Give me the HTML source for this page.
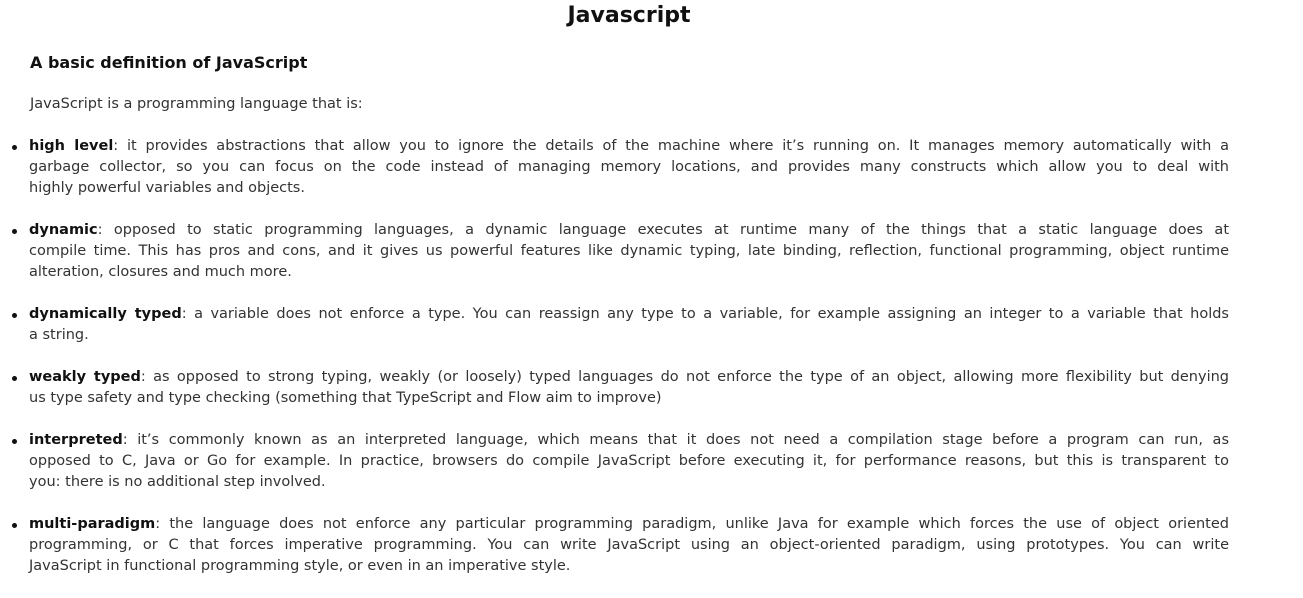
<!DOCTYPE html>
<html><head><meta charset="utf-8"><style>
body{margin:0;background:#fff;color:#111;font-family:"DejaVu Sans","Liberation Sans",sans-serif;width:1303px;height:584px;overflow:hidden}
h1{margin:0;position:absolute;top:3px;left:0;width:1258px;text-align:center;font-size:22px;line-height:26px;font-weight:bold}
h2{position:absolute;top:51px;left:30px;margin:0;font-size:16px;line-height:24px;font-weight:bold}
p.intro{position:absolute;top:94px;left:30px;margin:0;font-size:14.5px;line-height:21px;color:#333}
ul{position:absolute;top:136px;left:0;margin:0;padding:0;list-style:none;width:1229px}
li{position:relative;padding-left:29px;font-size:14.5px;line-height:21px;margin-bottom:21px;color:#333}
li:before{content:"";position:absolute;left:12px;top:9px;width:5px;height:5px;border-radius:50%;background:#111}
li span{display:block;text-align:justify;text-align-last:justify;white-space:nowrap}
li span.l{text-align-last:left}
b{color:#111}
</style></head><body>
<h1>Javascript</h1>
<h2>A basic definition of JavaScript</h2>
<p class="intro">JavaScript is a programming language that is:</p>
<ul>
<li><span><b>high level</b>: it provides abstractions that allow you to ignore the details of the machine where it’s running on. It manages memory automatically with a</span><span>garbage collector, so you can focus on the code instead of managing memory locations, and provides many constructs which allow you to deal with</span><span class="l">highly powerful variables and objects.</span></li>
<li><span><b>dynamic</b>: opposed to static programming languages, a dynamic language executes at runtime many of the things that a static language does at</span><span>compile time. This has pros and cons, and it gives us powerful features like dynamic typing, late binding, reflection, functional programming, object runtime</span><span class="l">alteration, closures and much more.</span></li>
<li><span><b>dynamically typed</b>: a variable does not enforce a type. You can reassign any type to a variable, for example assigning an integer to a variable that holds</span><span class="l">a string.</span></li>
<li><span><b>weakly typed</b>: as opposed to strong typing, weakly (or loosely) typed languages do not enforce the type of an object, allowing more flexibility but denying</span><span class="l">us type safety and type checking (something that TypeScript and Flow aim to improve)</span></li>
<li><span><b>interpreted</b>: it’s commonly known as an interpreted language, which means that it does not need a compilation stage before a program can run, as</span><span>opposed to C, Java or Go for example. In practice, browsers do compile JavaScript before executing it, for performance reasons, but this is transparent to</span><span class="l">you: there is no additional step involved.</span></li>
<li><span><b>multi-paradigm</b>: the language does not enforce any particular programming paradigm, unlike Java for example which forces the use of object oriented</span><span>programming, or C that forces imperative programming. You can write JavaScript using an object-oriented paradigm, using prototypes. You can write</span><span class="l">JavaScript in functional programming style, or even in an imperative style.</span></li>
</ul>
</body></html>
